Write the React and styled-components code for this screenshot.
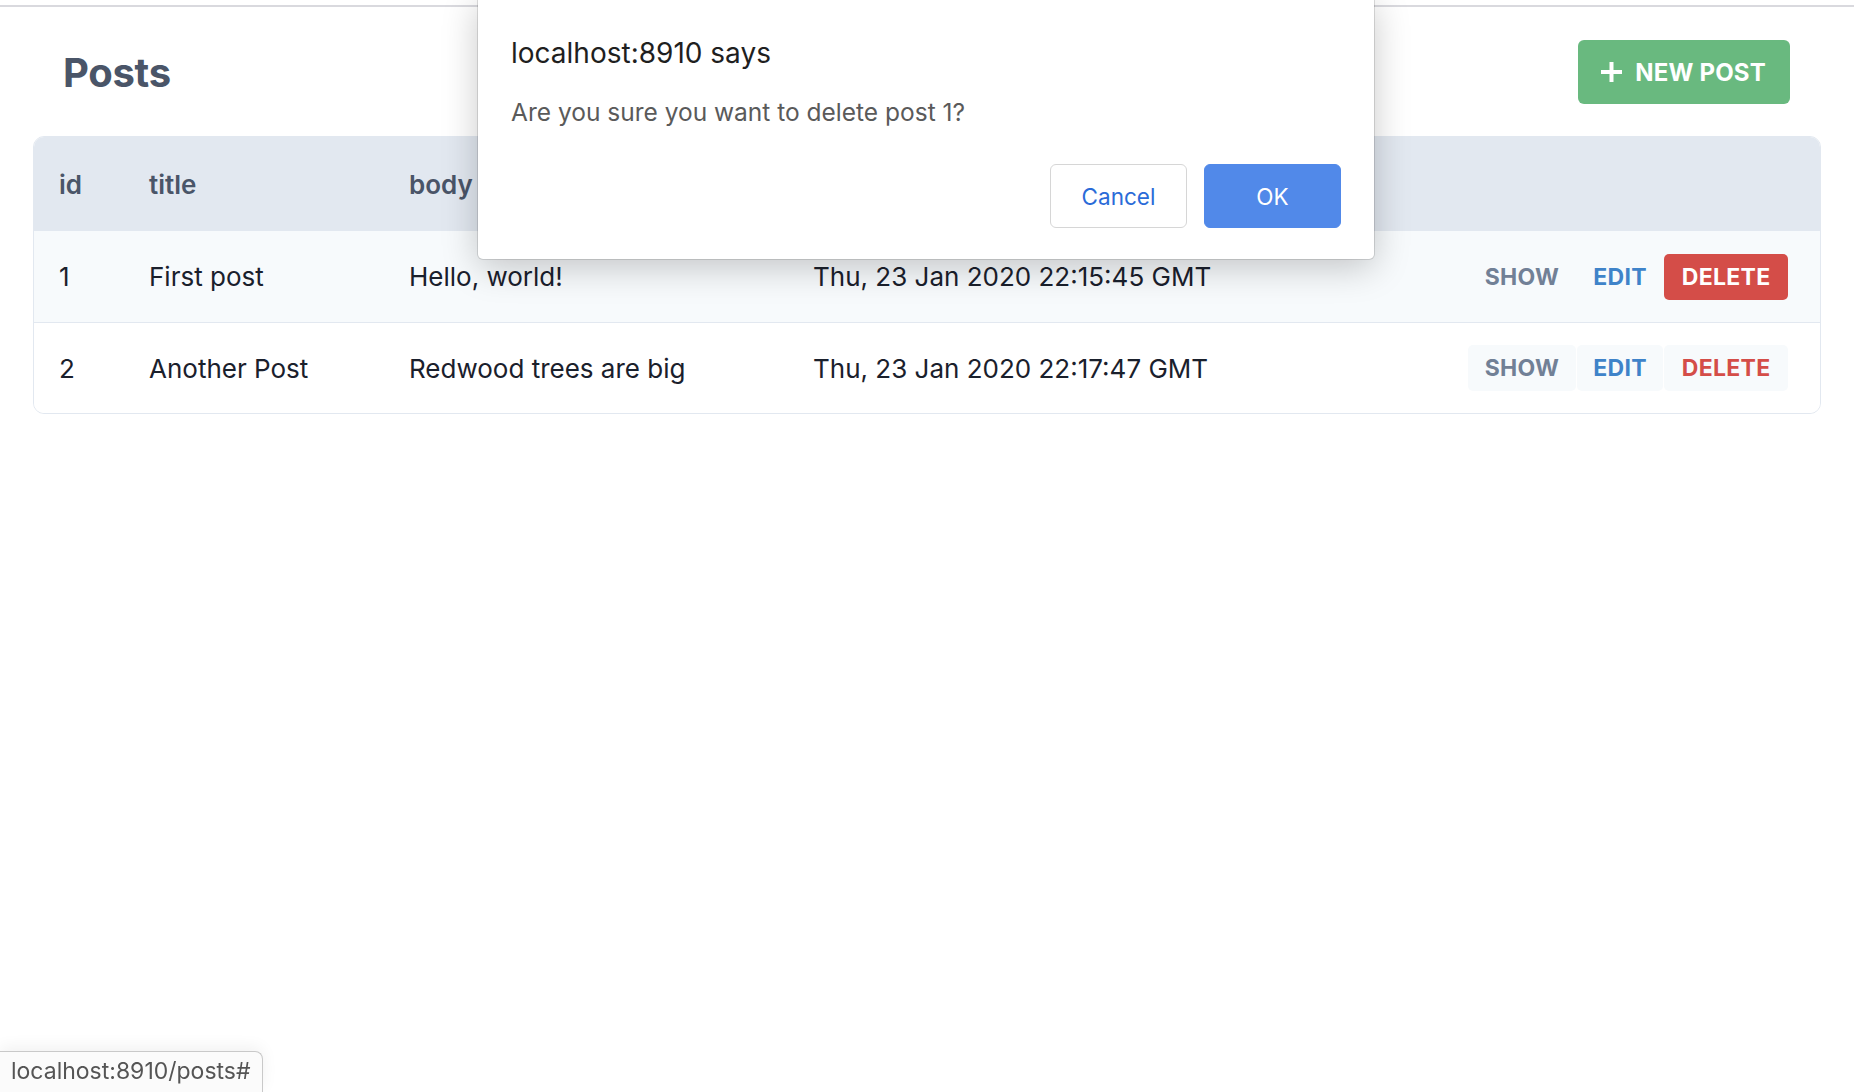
import styled, { createGlobalStyle } from 'styled-components';

const posts = [
  { id: 1, title: 'First post', body: 'Hello, world!', createdAt: 'Thu, 23 Jan 2020 22:15:45 GMT', hover: true },
  { id: 2, title: 'Another Post', body: 'Redwood trees are big', createdAt: 'Thu, 23 Jan 2020 22:17:47 GMT' },
];

function App() {
  return (
    <>
      <GlobalStyle />
      <Page>
        <Header>
          <Title>Posts</Title>
          <NewButton>
            <PlusIcon viewBox="0 0 21 20">
              <path d="M10.5 0v20M0 10h21" />
            </PlusIcon>
            NEW POST
          </NewButton>
        </Header>
        <Table>
          <HeadRow>
            <HeadCell>id</HeadCell>
            <HeadCell>title</HeadCell>
            <HeadCell>body</HeadCell>
            <HeadCell>createdAt</HeadCell>
            <HeadCell />
          </HeadRow>
          {posts.map((post) => (
            <Row key={post.id} $striped={post.id % 2 === 1}>
              <Cell>{post.id}</Cell>
              <Cell>{post.title}</Cell>
              <Cell>{post.body}</Cell>
              <Cell>{post.createdAt}</Cell>
              <Actions>
                <ActionButton $kind="show">Show</ActionButton>
                <ActionButton $kind="edit">Edit</ActionButton>
                <ActionButton $kind="delete" $active={post.hover}>Delete</ActionButton>
              </Actions>
            </Row>
          ))}
        </Table>
      </Page>

      <Dialog>
        <DialogTitle>localhost:8910 says</DialogTitle>
        <DialogText>Are you sure you want to delete post 1?</DialogText>
        <DialogButtons>
          <DialogButton>Cancel</DialogButton>
          <DialogButton $primary>OK</DialogButton>
        </DialogButtons>
      </Dialog>

      <StatusBar>localhost:8910/posts#</StatusBar>
    </>
  );
}

export default App;

const GlobalStyle = createGlobalStyle`
  * {
    box-sizing: border-box;
  }
  body {
    margin: 0;
    background: #fff;
    font-family: Inter, "Noto Sans", sans-serif;
    overflow: hidden;
  }
`;

const Page = styled.div`
  margin-top: 5px;
  border-top: 2px solid #d9d9de;
  padding: 0 33px;
  min-height: 1085px;
`;

const Header = styled.div`
  display: flex;
  align-items: center;
  justify-content: space-between;
  padding: 33px 31px 32px 30px;
`;

const Title = styled.h1`
  margin: 0;
  font-size: 40px;
  font-weight: 700;
  color: #4a5568;
  letter-spacing: -0.3px;
`;

const NewButton = styled.button`
  display: flex;
  align-items: center;
  gap: 13px;
  height: 64px;
  padding: 0 24px 0 23px;
  border: none;
  border-radius: 6px;
  background: #69b97f;
  color: #fff;
  font-family: inherit;
  font-size: 24px;
  font-weight: 700;
  letter-spacing: 0.2px;
`;

const PlusIcon = styled.svg`
  width: 21px;
  height: 20px;
  stroke: currentColor;
  stroke-width: 4;
  fill: none;
`;

const Table = styled.div`
  border: 1px solid #e2e8f0;
  border-radius: 11px;
  overflow: hidden;
`;

const columns = '90px 260px 404px 1fr auto';

const HeadRow = styled.div`
  display: grid;
  grid-template-columns: ${columns};
  align-items: center;
  height: 94px;
  background: #e2e8f0;
`;

const HeadCell = styled.div`
  padding: 0 25px;
  font-size: 26px;
  font-weight: 600;
  color: #4a5568;
`;

const Row = styled.div`
  display: grid;
  grid-template-columns: ${columns};
  align-items: center;
  height: 91px;
  background: ${(p) => (p.$striped ? '#f7fafc' : '#fff')};
  & + & {
    border-top: 1px solid #e2e8f0;
  }
`;

const Cell = styled.div`
  padding: 0 25px;
  font-size: 26px;
  color: #1a202c;
  white-space: nowrap;
`;

const Actions = styled.div`
  display: flex;
  gap: 1px;
  padding-right: 32px;
`;

const actionColors = {
  show: '#718096',
  edit: '#3f83c9',
  delete: '#d44d48',
};

const ActionButton = styled.button`
  height: 46px;
  padding: 0 ${(p) => (p.$kind === 'delete' ? '17.5px' : '16.5px')};
  border: none;
  border-radius: 5px;
  background: ${(p) => (p.$active ? actionColors.delete : '#f7fafc')};
  color: ${(p) => (p.$active ? '#fff' : actionColors[p.$kind])};
  font-family: inherit;
  font-size: 23px;
  font-weight: 700;
  text-transform: uppercase;
  letter-spacing: 0.3px;
`;

const Dialog = styled.div`
  position: absolute;
  left: 478px;
  top: -4px;
  width: 896px;
  padding: 40px 33px 31px;
  background: #fff;
  border-radius: 5px;
  box-shadow: 0 0 0 1px rgba(0, 0, 0, 0.12), 0 8px 36px rgba(0, 0, 0, 0.22);
`;

const DialogTitle = styled.div`
  font-size: 28px;
  line-height: 34px;
  color: #1f1f1f;
`;

const DialogText = styled.div`
  margin-top: 27px;
  font-size: 24.5px;
  line-height: 30px;
  color: #5a5a5a;
`;

const DialogButtons = styled.div`
  display: flex;
  justify-content: flex-end;
  gap: 17px;
  margin-top: 37px;
`;

const DialogButton = styled.button`
  width: 137px;
  height: 64px;
  border-radius: 6px;
  border: 1px solid ${(p) => (p.$primary ? '#5189e9' : '#d6d6d6')};
  background: ${(p) => (p.$primary ? '#5189e9' : '#fff')};
  color: ${(p) => (p.$primary ? '#fff' : '#2a6bd8')};
  font-family: inherit;
  font-size: 22.5px;
`;

const StatusBar = styled.div`
  position: fixed;
  left: 0;
  bottom: 0;
  width: 263px;
  height: 41px;
  padding: 5px 0 0 11px;
  background: #fbfbfb;
  border: 1px solid #c9c9c9;
  border-left: none;
  border-bottom: none;
  border-top-right-radius: 8px;
  box-shadow: 0 -4px 16px rgba(0, 0, 0, 0.06);
  font-size: 23px;
  color: #555;
  white-space: nowrap;
`;
